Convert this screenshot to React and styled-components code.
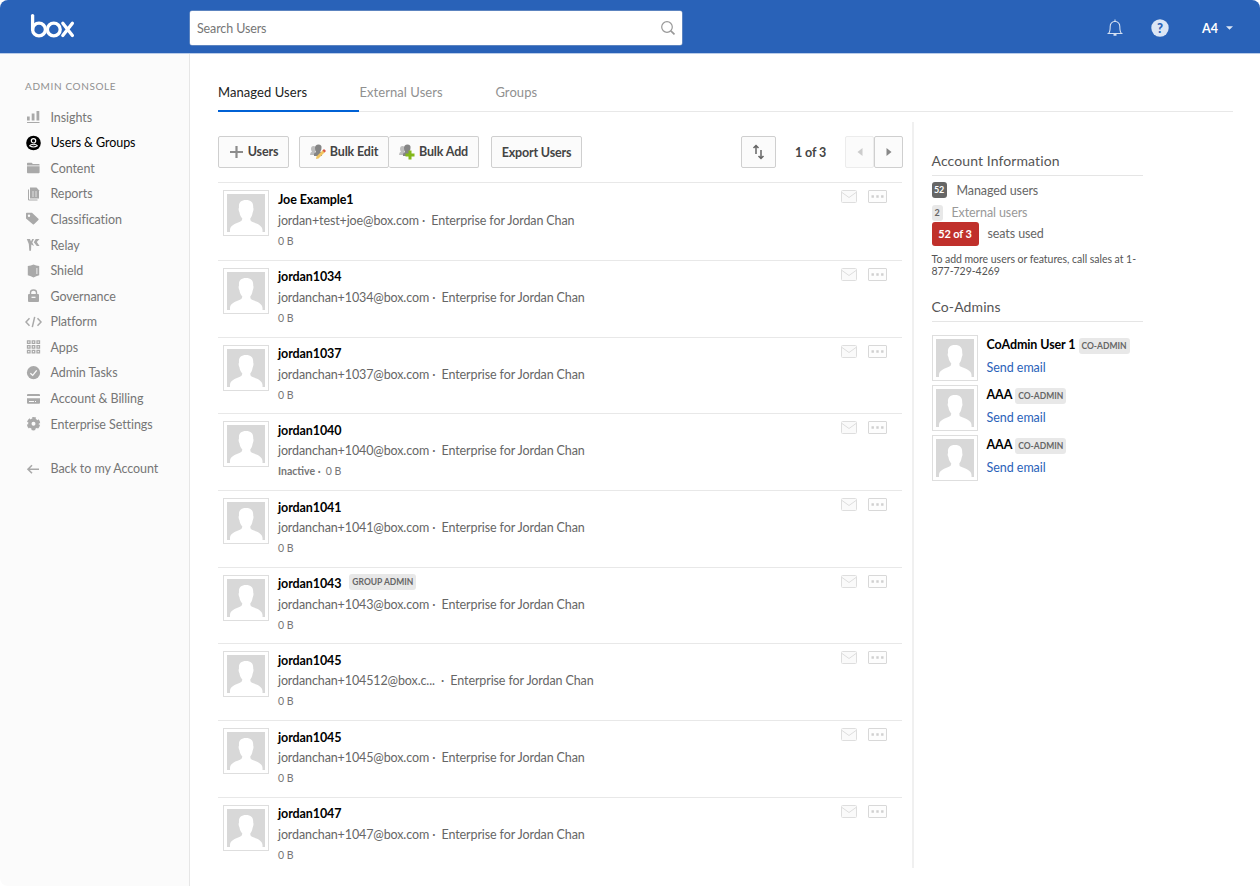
import React from "react";
import styled, { createGlobalStyle } from "styled-components";

const GlobalStyle = createGlobalStyle`
  * {
    box-sizing: border-box;
  }

  body {
    margin: 0;
    background: #fff;
    color: #555;
    font-family: Lato, "Liberation Sans", sans-serif;
    font-size: 12.5px;
    overflow: hidden;
  }

  svg {
    display: block;
    flex-shrink: 0;
  }
`;

const Page = styled.div`
  width: 1260px;
  height: 886px;
  display: flex;
  flex-direction: column;
  overflow: hidden;
  border-radius: 8px;
`;

const Header = styled.header`
  height: 54px;
  flex-shrink: 0;
  display: flex;
  align-items: flex-start;
  background: #2962b8;
  border-bottom: 1px solid #b9cce9;

  .logo {
    margin: 13px 0 0 30px;
    width: 160px;
  }
`;

const SearchBox = styled.div`
  width: 492px;
  height: 34px;
  margin-top: 11px;
  padding: 0 6px 0 7px;
  display: flex;
  align-items: center;
  justify-content: space-between;
  background: #fff;
  border-radius: 2px;
  box-shadow: 0 0 0 0.5px #8fa5c8;
  color: #767676;
  letter-spacing: -0.12px;
`;

const HeaderTools = styled.div`
  height: 55px;
  margin-left: auto;
  padding-right: 27px;
  display: flex;
  align-items: center;
  color: #fff;

  .help {
    margin-left: 27px;
  }

  .account {
    margin: 1px 8px 0 33px;
    font-weight: 700;
  }
`;

const Body = styled.div`
  flex: 1;
  display: flex;
  min-height: 0;
`;

const Sidebar = styled.nav`
  width: 190px;
  flex-shrink: 0;
  padding-top: 24px;
  background: #fbfbfb;
  border-right: 1px solid #e6e6e6;

  .heading {
    height: 16px;
    line-height: 16px;
    margin-bottom: 10.4px;
    padding-left: 25px;
    color: #909090;
    font-size: 10px;
    letter-spacing: 0.62px;
  }
`;

const NavItem = styled.div`
  height: 25.58px;
  margin-top: ${({ $gap }) => $gap || 0}px;
  padding-left: 25px;
  display: flex;
  align-items: center;
  color: ${({ $active }) => ($active ? "#000" : "#767676")};
  letter-spacing: -0.07px;

  svg {
    margin-right: 8.5px;
    color: ${({ $active }) => ($active ? "#000" : "#a9a9a9")};
  }
`;

const Main = styled.main`
  flex: 1;
  padding: 21px 27px 0 28px;
`;

const Tabs = styled.div`
  height: 37px;
  display: flex;
  border-bottom: 1px solid #e8e8e8;
`;

const Tab = styled.div`
  width: ${({ $width }) => $width}px;
  height: 37px;
  line-height: 35px;
  color: ${({ $active }) => ($active ? "#222" : "#909090")};
  border-bottom: ${({ $active }) => ($active ? "2px solid #0061d5" : "none")};
  font-size: 13px;
  letter-spacing: 0.07px;
`;

const Columns = styled.div`
  display: flex;
`;

const UsersPanel = styled.section`
  width: 696px;
  height: 746px;
  margin-top: 10px;
  padding: 14px 10px 0 0;
  border-right: 2px solid #f0f0f0;
`;

const Toolbar = styled.div`
  height: 46px;
  display: flex;
  align-items: flex-start;

  .page {
    width: 32px;
    flex-shrink: 0;
    margin: 0 18px 0 19px;
    line-height: 33px;
    font-weight: 700;
    color: #444;
    letter-spacing: -0.1px;
    white-space: nowrap;
  }
`;

const Button = styled.button`
  width: ${({ $width }) => $width}px;
  height: 32px;
  flex-shrink: 0;
  margin: 0 ${({ $after }) => $after || 0}px 0 0;
  padding: 0 0 ${({ $raised }) => ($raised ? 2 : 0)}px;
  display: flex;
  align-items: center;
  justify-content: center;
  gap: 4px;
  background: #fbfbfb;
  border: 1px solid ${({ $faded }) => ($faded ? "#ececec" : "#cfcfcf")};
  border-left-width: ${({ $joined }) => ($joined ? 0 : 1)}px;
  border-radius: 2px;
  color: #444;
  font-family: inherit;
  font-size: 12.5px;
  font-weight: 700;
  letter-spacing: -0.16px;
  white-space: nowrap;

  svg {
    margin-top: ${({ $raised }) => ($raised ? 2 : 0)}px;
  }
`;

const Row = styled.div`
  height: ${({ $first }) => ($first ? 77.9 : 76.71)}px;
  padding: 7px 15px 0 5px;
  display: flex;
  align-items: flex-start;
  border-top: 1px solid #e8e8e8;

  .info {
    margin: -1px auto 0 9px;
  }

  .name {
    height: 20px;
    display: flex;
    align-items: center;
    color: #000;
    font-weight: 700;
    letter-spacing: -0.1px;
  }

  .mail {
    height: 20px;
    line-height: 20px;
    margin-top: ${({ $first }) => ($first ? 2 : 1)}px;
    color: #666;
    letter-spacing: -0.11px;
    white-space: pre;
  }

  .usage {
    height: 21px;
    line-height: 21px;
    color: #767676;
    font-size: 10.5px;
    white-space: pre;
  }

  .envelope {
    margin-right: 11px;
  }
`;

const Badge = styled.span`
  height: 16px;
  line-height: 16px;
  margin: ${({ $margin }) => $margin};
  padding: 0 3px;
  background: #e8e8e8;
  border-radius: 3px;
  color: #666;
  font-size: 8.5px;
  font-weight: 700;
  letter-spacing: 0;
`;

const AvatarFrame = styled.div`
  width: 46px;
  height: 46px;
  padding: 3px;
  border: 1px solid #dedede;
  background: #fff;
`;

const InfoPanel = styled.aside`
  width: 211px;
  margin: 39px 0 0 17.5px;

  h2 {
    height: 25px;
    margin: 0;
    line-height: 20px;
    border-bottom: 1px solid #e5e5e5;
    color: #555;
    font-size: 14px;
    font-weight: 400;
    letter-spacing: 0.1px;
  }

  p {
    height: 24px;
    margin: 7px 0 20px;
    line-height: 12px;
    font-size: 10.5px;
    letter-spacing: -0.03px;
    white-space: nowrap;
  }
`;

const Stat = styled.div`
  height: ${({ $height }) => $height}px;
  display: flex;
  align-items: center;
  color: ${({ $muted }) => ($muted ? "#999" : "#666")};
  letter-spacing: -0.1px;
`;

const Count = styled.span`
  width: ${({ $width }) => $width}px;
  height: ${({ $height }) => $height}px;
  line-height: ${({ $height }) => $height}px;
  margin-right: ${({ $after }) => $after}px;
  background: ${({ $bg }) => $bg};
  border-radius: 3px;
  color: ${({ $color }) => $color || "#fff"};
  font-size: ${({ $size }) => $size || 9}px;
  font-weight: 700;
  text-align: center;
`;

const CoAdmins = styled.div`
  padding-top: 12.5px;
`;

const CoAdmin = styled.div`
  height: 50.2px;
  display: flex;

  .details {
    margin-left: 9px;
  }

  .name {
    height: 20px;
    display: flex;
    align-items: center;
    color: #000;
    font-weight: 700;
    letter-spacing: -0.1px;
  }

  .link {
    height: 26px;
    line-height: 26px;
    color: #2a62b9;
    letter-spacing: -0.04px;
  }
`;

const NavIcon = ({ children }) => (
  <svg width="17" height="16" viewBox="0 0 17 16" fill="currentColor">{children}</svg>
);

const icons = {
  insights: <path d="M2 7.500h2.700v4H2zM6.700 4.500h2.800v7H6.700zM11.500 2h2.800v9.500h-2.800zM2 13h12.500v1H2z" />,
  users: (
    <>
      <circle cx="8.500" cy="8" r="7.300" />
      <circle cx="8.500" cy="5.800" r="2.200" fill="none" stroke="#fbfbfb" strokeWidth="1.200" />
      <path d="M4.700 10.800C5.500 9.200 6.800 9.200 8.500 9.700C10.200 9.200 11.500 9.200 12.300 10.800Q8.500 13.300 4.700 10.800Z" fill="none" stroke="#fbfbfb" strokeWidth="1.100" />
    </>
  ),
  content: <path d="M2 3.500q0-.8.8-.8h4l1 1.200h6q.8 0 .8.8v.8H2zM2 6.300h12.600v6q0 .9-.8.900H2.800q-.8 0-.8-.9z" />,
  reports: (
    <>
      <path d="M5 1.500h6.500L14 4.200v8.300H5z" />
      <path d="M3.500 3.500v10.500h9" fill="none" stroke="currentColor" strokeWidth="1" />
      <path d="M7 6h2M10 6h2M7 8h2M10 8h2M7 10h2M10 10h2" stroke="#e6e6e6" strokeWidth=".9" />
    </>
  ),
  tag: <path fillRule="evenodd" d="M1 2.500Q1 1.700 1.800 1.700H7l6.400 6q.6.600 0 1.200L9 13.300q-.6.600-1.200 0L1 7.500zM4 3.500a1.200 1.200 0 1 0 0 2.400a1.200 1.200 0 0 0 0-2.400z" />,
  relay: <path d="M1.800 2H5l1 2.500L7.200 2H9L7.300 5.500 9 9 6.300 7.500 6 13.800H4.300L3.800 7zM10.700 2h3.800l-2.700 3 2.700 4h-2.700L8.800 5.300z" />,
  shield: (
    <>
      <path d="M2.800 3Q6 3 8.500 1.600Q11 3 14.200 3V12.300Q11 13 8.500 14.500Q6 13 2.800 12.300z" />
      <path d="M11.900 5v6" stroke="#eee" strokeWidth="1" />
    </>
  ),
  lock: (
    <>
      <rect x="3" y="6" width="11" height="8" rx="1" />
      <path d="M5.500 7V4.500a3 2.500 0 0 1 6 0V7" fill="none" stroke="currentColor" strokeWidth="1.400" />
      <path d="M6.500 9.300h4" stroke="#fff" strokeWidth="1.200" />
    </>
  ),
  code: <path d="M4.500 4.300L1 8l3.500 3.700M12.500 4.300L16 8l-3.500 3.700M9.700 2.800L7.300 13.200" fill="none" stroke="currentColor" strokeWidth="1.500" />,
  apps: (
    <path
      d="M2.500 1.800h2.500v2.500H2.500zM7.250 1.800h2.500v2.500h-2.500zM12 1.800h2.500v2.500H12zM2.500 6.550h2.500v2.500H2.500zM7.250 6.550h2.500v2.500h-2.500zM12 6.550h2.500v2.500H12zM2.500 11.300h2.500v2.500H2.500zM7.250 11.300h2.500v2.500h-2.500zM12 11.300h2.500v2.500H12z"
      fill="none"
      stroke="currentColor"
      strokeWidth="1.300"
    />
  ),
  tasks: (
    <>
      <circle cx="8.500" cy="7.700" r="6.600" />
      <path d="M5.400 8.200l2.300 2.200 4-5" fill="none" stroke="#fbfbfb" strokeWidth="1.300" />
    </>
  ),
  billing: <path fillRule="evenodd" d="M3 3h11q1 0 1 1v1H2V4q0-1 1-1zM2 7.200h13v4.600q0 1-1 1H3q-1 0-1-1zM4 10v1.100h5V10zM10 10v1.100h1V10z" />,
  settings: (
    <>
      <circle cx="8.500" cy="7.700" r="3.700" fill="none" stroke="currentColor" strokeWidth="3.400" />
      <circle cx="8.500" cy="7.700" r="5.600" fill="none" stroke="currentColor" strokeWidth="2.200" strokeDasharray="3.600 2.264" strokeDashoffset="-1" />
    </>
  ),
  back: <path d="M14 8.300H3.500M7 4.300L3 8.300l4 4" fill="none" stroke="currentColor" strokeWidth="1.600" />,
};

const navItems = [
  ["Insights", "insights"],
  ["Users & Groups", "users"],
  ["Content", "content"],
  ["Reports", "reports"],
  ["Classification", "tag"],
  ["Relay", "relay"],
  ["Shield", "shield"],
  ["Governance", "lock"],
  ["Platform", "code"],
  ["Apps", "apps"],
  ["Admin Tasks", "tasks"],
  ["Account & Billing", "billing"],
  ["Enterprise Settings", "settings"],
];

const users = [
  { name: "Joe Example1", mail: "jordan+test+joe@box.com" },
  { name: "jordan1034", mail: "jordanchan+1034@box.com" },
  { name: "jordan1037", mail: "jordanchan+1037@box.com" },
  { name: "jordan1040", mail: "jordanchan+1040@box.com", inactive: true },
  { name: "jordan1041", mail: "jordanchan+1041@box.com" },
  { name: "jordan1043", mail: "jordanchan+1043@box.com", role: "GROUP ADMIN" },
  { name: "jordan1045", mail: "jordanchan+104512@box.c... " },
  { name: "jordan1045", mail: "jordanchan+1045@box.com" },
  { name: "jordan1047", mail: "jordanchan+1047@box.com" },
];

const coAdmins = ["CoAdmin User 1", "AAA", "AAA"];

const Logo = () => (
  <svg className="logo" width="160" height="28" viewBox="0 0 160 28" fill="none" stroke="#fff" strokeWidth="3.300" strokeLinecap="round">
    <path d="M2.600 2.600v14" />
    <circle cx="9" cy="16.500" r="6.400" />
    <circle cx="23.800" cy="16.500" r="6.400" />
    <path d="M32.800 10.300l9.600 12.200M42.400 10.300l-9.600 12.200" />
  </svg>
);

const Avatar = () => (
  <AvatarFrame>
    <svg width="38" height="38" viewBox="0 0 38 38">
      <rect width="38" height="38" fill="#d8d8d8" />
      <path
        d="M3 38V36C3 31.500 8 29.500 13 27.700Q15.500 26.700 15.300 24.500C13.500 22.700 12.800 20.500 12.500 18.500Q11 15.500 12 13.500C11.500 8.500 14 6 19 6S26.500 8.500 26.200 13.500Q27 15.500 25.700 18.500C25.300 21 24.500 23 23.300 24.500Q23 27 25 27.700C30 29.500 35.500 31.500 35.500 36V38Z"
        fill="#fff"
      />
    </svg>
  </AvatarFrame>
);

const PeopleIcon = ({ type }) => (
  <svg width="16" height="16" viewBox="0 0 16 16">
    <path d="M1 5q0-3 2.500-3T6 5q0 2-1 3v3H0q0-3 2-3.500Q1 6.500 1 5z" fill="#bdbdbd" />
    <path d="M5 4q0-3.500 3.500-3.500T11.500 4q0 2.500-1.300 3.500Q12 8 12 12H4q-.5-3 2-4Q5 6 5 4z" fill="#858585" />
    {type === "edit" ? (
      <>
        <path d="M6.500 12.500L13 6l2 2-6.500 6.500L6 15z" fill="#f2c560" />
        <path d="M12.500 6.500L14 5l2 2-1.500 1.500z" fill="#d95645" />
      </>
    ) : (
      <path d="M9.500 6.500h3V9.500H15.500v3H12.500V15.500H9.500V12.500H6.500v-3h3z" fill="#83b81a" />
    )}
  </svg>
);

const UserRow = ({ user, first }) => (
  <Row $first={first}>
    <Avatar />
    <div className="info">
      <div className="name">
        {user.name}
        {user.role && <Badge $margin="-4px 0 0 8px">{user.role}</Badge>}
      </div>
      <div className="mail">{`${user.mail} ·  Enterprise for Jordan Chan`}</div>
      <div className="usage">
        {user.inactive && <b>{"Inactive ·  "}</b>}0 B
      </div>
    </div>
    <svg className="envelope" width="16" height="13" viewBox="0 0 16 13" fill="#fafafa" stroke="#dedede">
      <rect x=".5" y=".5" width="15" height="12" rx="1" />
      <path d="M1 2.500l7 5 7-5" fill="none" />
    </svg>
    <svg width="19" height="13" viewBox="0 0 19 13">
      <rect x=".5" y=".5" width="18" height="12" rx=".5" fill="#fdfdfd" stroke="#d8d8d8" />
      <path d="M3.500 5.300h2.400v2.400H3.500zM8.300 5.300h2.400v2.400H8.300zM13.100 5.300h2.400v2.400h-2.400z" fill="#d0d0d0" />
    </svg>
  </Row>
);

const App = () => (
  <>
    <GlobalStyle />
    <Page>
      <Header>
        <Logo />
        <SearchBox>
          Search Users
          <svg width="16" height="16" viewBox="0 0 16 16" fill="none" stroke="#999" strokeWidth="1.200">
            <circle cx="7" cy="7" r="5.300" />
            <path d="M10.800 10.800l3.700 3.500" strokeWidth="1.700" />
          </svg>
        </SearchBox>
        <HeaderTools>
          <svg width="18" height="18" viewBox="0 0 18 18" fill="none" stroke="#d4e0f2" strokeWidth="1.100">
            <path d="M1.500 14.500h15M2.500 14.500Q4.200 13 4.200 7.500Q4.200 3 9 2.200Q13.800 3 13.800 7.500Q13.800 13 15.500 14.500M9 2.200V.5" />
            <path d="M7.500 15h3v1.700h-3z" fill="#d4e0f2" stroke="none" />
          </svg>
          <svg className="help" width="18" height="18" viewBox="0 0 18 18">
            <circle cx="9" cy="9" r="8.700" fill="#dce6f5" />
            <text x="9" y="13.500" textAnchor="middle" fontSize="13" fontWeight="900" fill="#2962b8">?</text>
          </svg>
          <span className="account">A4</span>
          <svg width="7" height="4" viewBox="0 0 7 4"><path d="M0 .3h7L3.500 3.800z" fill="#dce6f5" /></svg>
        </HeaderTools>
      </Header>
      <Body>
        <Sidebar>
          <div className="heading">ADMIN CONSOLE</div>
          {navItems.map(([label, icon]) => (
            <NavItem key={label} $active={icon === "users"}>
              <NavIcon>{icons[icon]}</NavIcon>
              {label}
            </NavItem>
          ))}
          <NavItem $gap={19}>
            <NavIcon>{icons.back}</NavIcon>
            Back to my Account
          </NavItem>
        </Sidebar>
        <Main>
          <Tabs>
            <Tab $active $width={141.4}>Managed Users</Tab>
            <Tab $width={136}>External Users</Tab>
            <Tab $width={80}>Groups</Tab>
          </Tabs>
          <Columns>
            <UsersPanel>
              <Toolbar>
                <Button $width={71} $after={10} $raised>
                  <svg width="15" height="14" viewBox="0 0 15 14"><path d="M7.500 1v12M1 7h13" stroke="#8c8c8c" strokeWidth="2.200" /></svg>
                  Users
                </Button>
                <Button $width={90} $raised><PeopleIcon type="edit" />Bulk Edit</Button>
                <Button $width={90} $after={12} $joined $raised><PeopleIcon type="add" />Bulk Add</Button>
                <Button $width={91} $after={159}>Export Users</Button>
                <Button $width={35}>
                  <svg width="14" height="16" viewBox="0 0 14 16" fill="none" stroke="#666" strokeWidth="1.500">
                    <path d="M4 10V1.500M1.500 4L4 1.500 6.500 4M9 6v8.500M6.500 12l2.500 2.500L11.500 12" />
                  </svg>
                </Button>
                <span className="page">1 of 3</span>
                <Button $width={29} $faded>
                  <svg width="6" height="8" viewBox="0 0 6 8"><path d="M5.500 0v8L.5 4z" fill="#ccc" /></svg>
                </Button>
                <Button $width={29}>
                  <svg width="6" height="8" viewBox="0 0 6 8"><path d="M.5 0v8l5-4z" fill="#888" /></svg>
                </Button>
              </Toolbar>
              {users.map((user, index) => (
                <UserRow key={user.mail} user={user} first={index === 0} />
              ))}
            </UsersPanel>
            <InfoPanel>
              <h2>Account Information</h2>
              <Stat $height={28}>
                <Count $width={15} $height={16} $after={10} $bg="#666">52</Count>
                Managed users
              </Stat>
              <Stat $height={17} $muted>
                <Count $width={11} $height={16} $after={9} $bg="#e8e8e8" $color="#666">2</Count>
                External users
              </Stat>
              <Stat $height={25}>
                <Count $width={47} $height={24} $after={9} $bg="#c0302b" $size={11}>52 of 3</Count>
                seats used
              </Stat>
              <p>To add more users or features, call sales at 1-<br />877-729-4269</p>
              <h2>Co-Admins</h2>
              <CoAdmins>
                {coAdmins.map((name, index) => (
                  <CoAdmin key={index}>
                    <Avatar />
                    <div className="details">
                      <div className="name">
                        {name}
                        <Badge $margin="2px 0 0 3px">CO-ADMIN</Badge>
                      </div>
                      <div className="link">Send email</div>
                    </div>
                  </CoAdmin>
                ))}
              </CoAdmins>
            </InfoPanel>
          </Columns>
        </Main>
      </Body>
    </Page>
  </>
);

export default App;
